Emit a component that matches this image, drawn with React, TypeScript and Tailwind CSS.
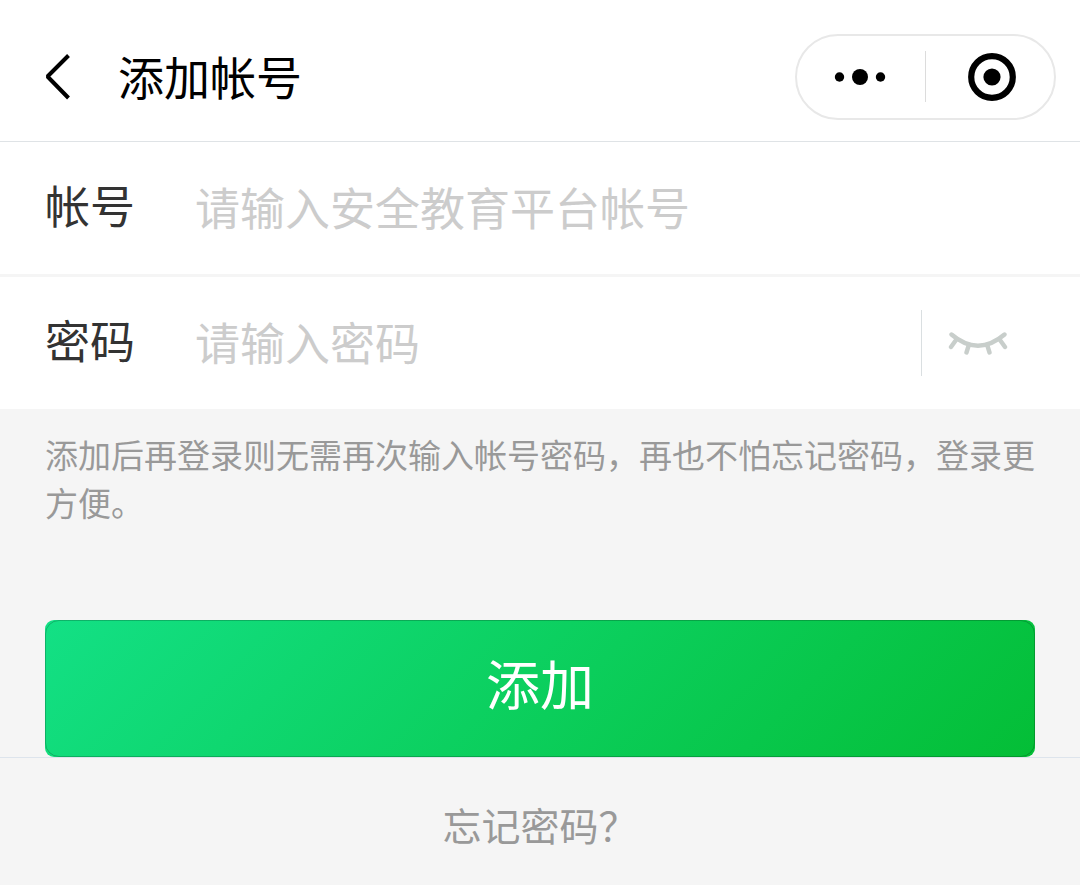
import React, { useState } from 'react';

function Header(): React.ReactElement {
  return (
    <header className="flex items-center h-[142px] pt-3 pl-[45px] pr-6 bg-white border-b border-[#dfe3e6]">
      <button type="button" aria-label="返回" className="shrink-0">
        <svg className="block w-7 h-12" viewBox="0 0 28 48" fill="none" stroke="#000" strokeWidth="4">
          <path d="M23.5 2.5 2.5 23.5l21 21.5" strokeLinejoin="bevel" />
        </svg>
      </button>
      <h1 className="ml-[45px] flex-1 pb-1 text-[46px] leading-[64px] text-black">添加帐号</h1>
      <div className="flex items-center w-[261px] h-[86px] border-2 border-[#e8e8e8] rounded-full">
        <button type="button" aria-label="更多" className="w-1/2 flex justify-center pr-0.5">
          <svg className="block w-[52px] h-5" viewBox="0 0 52 20" fill="#000">
            <circle cx="5.5" cy="10" r="4.7" />
            <circle cx="26" cy="10" r="8" />
            <circle cx="46.5" cy="10" r="4.7" />
          </svg>
        </button>
        <span className="shrink-0 w-px h-[51px] bg-[#dcdcdc]" />
        <button type="button" aria-label="关闭" className="w-1/2 flex justify-center pl-1">
          <svg className="block w-12 h-12" viewBox="0 0 48 48">
            <circle cx="24" cy="24" r="20.8" fill="none" stroke="#000" strokeWidth="6.2" />
            <circle cx="24" cy="24" r="8.6" fill="#000" />
          </svg>
        </button>
      </div>
    </header>
  )
}

function Field({
  id,
  label,
  placeholder,
  type = "text",
  value,
  onChange,
  children,
}:{
  id: string,
  label: string,
  placeholder: string,
  type?: string,
  value: string,
  onChange: (value: string)=>void,
  children?: React.ReactNode,
}): React.ReactElement {
  return (
    <div className="flex items-center h-[135px] pl-[45px] bg-white border-b-3 border-[#f5f5f5]">
      <label htmlFor={id} className="w-[150px] shrink-0 pb-1.5 text-[45px] leading-[64px] text-[#333333]">{label}</label>
      <input
        id={id}
        type={type}
        value={value}
        placeholder={placeholder}
        onChange={e=>onChange(e.target.value)}
        className="flex-1 min-w-0 h-16 pb-0.5 text-[45px] text-[#333333] placeholder:text-[#cccccc] outline-none"
      />
      {children}
    </div>
  )
}

export default function App(): React.ReactElement {
  const [ account, setAccount ] = useState("");
  const [ password, setPassword ] = useState("");
  const [ showPassword, setShowPassword ] = useState(false);

  return (
    <div lang="zh-CN" className="bg-[#f5f5f5] font-['Noto_Sans_CJK_SC',sans-serif]">
      <Header />
      <form onSubmit={e=>e.preventDefault()}>
        <Field id="account" label="帐号" placeholder="请输入安全教育平台帐号"
          value={account} onChange={setAccount}
        />
        <Field id="password" label="密码" placeholder="请输入密码"
          type={showPassword ? "text" : "password"}
          value={password} onChange={setPassword}
        >
          <div className="flex items-center h-[66px] pl-[26px] pr-[72px] border-l border-[#dadfe1]">
            <button type="button" aria-label="显示密码" onClick={()=>setShowPassword(!showPassword)}>
              <svg className="block w-[60px] h-6" viewBox="0 0 60 24" fill="none"
                stroke="#c8cecb" strokeWidth="4.4" strokeLinecap="round"
              >
                <path d="M3.5 3.5Q30 26 56.5 3.5" />
                <path d="M8 9 3 16M20.5 15 18.5 21.5M39.5 15l2 6.5M52 9l5 7" />
              </svg>
            </button>
          </div>
        </Field>
        <p className="px-[45px] pt-[18px] text-[33px] leading-[48px] text-[#999999]">
          添加后再登录则无需再次输入帐号密码，再也不怕忘记密码，登录更方便。
        </p>
        <div className="px-[45px] pt-[94px]">
          <button
            type="submit"
            className="block w-full h-[137px] p-0 overflow-hidden rounded-[9px] bg-[linear-gradient(135deg,#13e085,#04be36)] text-[54px] text-white"
          >
            <span className="flex items-center justify-center h-full pb-3 border border-black/20 rounded-[14px]">添加</span>
          </button>
        </div>
      </form>
      <footer className="flex items-center justify-center h-32 pt-1 border-t border-[#dde4ec]">
        <a href="#forgot" className="text-[39px] leading-[56px] text-[#999999]">忘记密码？</a>
      </footer>
    </div>
  )
}
